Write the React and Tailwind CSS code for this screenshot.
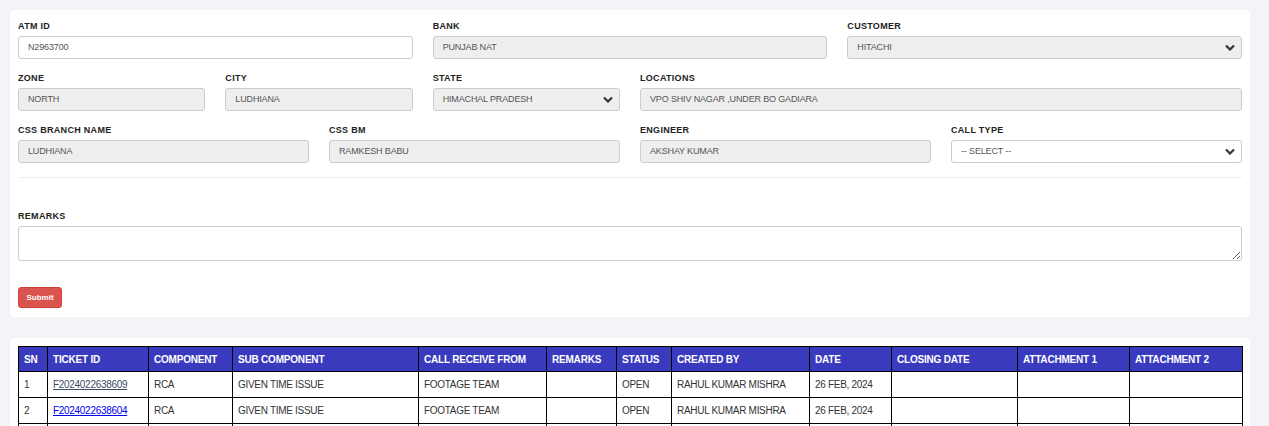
import React from "react";

const font = { fontFamily: '"Liberation Sans", Arial, sans-serif' };

function Label({ children }) {
  return (
    <div className="h-[12px] mb-[4px] text-[9px] leading-[12px] font-bold text-[#222] tracking-[0.3px]">
      {children}
    </div>
  );
}

function Field({ label, value, span, readOnly = true }) {
  return (
    <div className={span}>
      <Label>{label}</Label>
      <div
        className={`h-[23px] flex items-center px-[9px] border border-[#ccc] rounded-[3px] text-[9px] tracking-[-0.15px] text-[#555] ${
          readOnly ? "bg-[#eee]" : "bg-white"
        }`}
      >
        {value}
      </div>
    </div>
  );
}

function SelectField({ label, value, span, gray = true }) {
  return (
    <div className={span}>
      <Label>{label}</Label>
      <div
        className={`h-[23px] flex items-center justify-between pl-[9px] pr-[6px] border border-[#ccc] rounded-[3px] text-[9px] tracking-[-0.15px] text-[#555] ${
          gray ? "bg-[#eee]" : "bg-white"
        }`}
      >
        <span>{value}</span>
        <svg width="10" height="7" viewBox="0 0 10 7">
          <path d="M1 1.5 L5 5.5 L9 1.5" fill="none" stroke="#333" strokeWidth="2.2" />
        </svg>
      </div>
    </div>
  );
}

const cols = [
  ["SN", 29],
  ["TICKET ID", 101],
  ["COMPONENT", 84],
  ["SUB COMPONENT", 186],
  ["CALL RECEIVE FROM", 128],
  ["REMARKS", 70],
  ["STATUS", 55],
  ["CREATED BY", 138],
  ["DATE", 82],
  ["CLOSING DATE", 126],
  ["ATTACHMENT 1", 112],
  ["ATTACHMENT 2", 113],
];

const rows = [
  ["1", "F2024022638609", "RCA", "GIVEN TIME ISSUE", "FOOTAGE TEAM", "", "OPEN", "RAHUL KUMAR MISHRA", "26 FEB, 2024", "", "", ""],
  ["2", "F2024022638604", "RCA", "GIVEN TIME ISSUE", "FOOTAGE TEAM", "", "OPEN", "RAHUL KUMAR MISHRA", "26 FEB, 2024", "", "", ""],
  ["", "", "", "", "", "", "", "", "", "", "", ""],
];

export default function App() {
  return (
    <div style={font} className="w-[1269px] h-[426px] overflow-hidden bg-[#f3f4f8] pt-[10px] pl-[10px]">
      <div className="w-[1240px] bg-white rounded-[4px] px-[8px] pt-[10px] pb-[9px]">
        <div className="grid grid-cols-12 gap-x-[20px] gap-y-[13px]">
          <Field label="ATM ID" value="N2963700" span="col-span-4" readOnly={false} />
          <Field label="BANK" value="PUNJAB NAT" span="col-span-4" />
          <SelectField label="CUSTOMER" value="HITACHI" span="col-span-4" />

          <Field label="ZONE" value="NORTH" span="col-span-2" />
          <Field label="CITY" value="LUDHIANA" span="col-span-2" />
          <SelectField label="STATE" value="HIMACHAL PRADESH" span="col-span-2" />
          <Field label="LOCATIONS" value="VPO SHIV NAGAR ,UNDER BO GADIARA" span="col-span-6" />

          <Field label="CSS BRANCH NAME" value="LUDHIANA" span="col-span-3" />
          <Field label="CSS BM" value="RAMKESH BABU" span="col-span-3" />
          <Field label="ENGINEER" value="AKSHAY KUMAR" span="col-span-3" />
          <SelectField label="CALL TYPE" value="-- SELECT --" span="col-span-3" gray={false} />
        </div>

        <div className="mt-[14px] h-px bg-[#eee]" />

        <div className="mt-[32px]">
          <Label>REMARKS</Label>
          <textarea className="block w-full h-[35px] border border-[#ccc] rounded-[3px] bg-white resize-y outline-none" />
        </div>

        <button className="mt-[26px] h-[21px] w-[44px] rounded-[3px] bg-[#d9534f] text-white text-[8px] leading-[19px] font-bold border border-[#d43f3a]">
          Submit
        </button>
      </div>

      <div className="mt-[21px] w-[1240px] h-[100px] bg-white rounded-[4px] px-[8px] pt-[8px]">
        <table className="table-fixed border-collapse w-[1224px] text-[10px]">
          <colgroup>
            {cols.map(([n, w]) => (
              <col key={n} style={{ width: w }} />
            ))}
          </colgroup>
          <thead>
            <tr className="bg-[#3a3abf] h-[25px]">
              {cols.map(([n]) => (
                <th
                  key={n}
                  className="border border-black text-left text-white font-bold px-[5px] whitespace-nowrap tracking-[-0.2px]"
                >
                  {n}
                </th>
              ))}
            </tr>
          </thead>
          <tbody>
            {rows.map((r, i) => (
              <tr key={i} className="h-[26px]">
                {r.map((c, j) => (
                  <td
                    key={j}
                    className="border border-black px-[5px] text-[#333] whitespace-nowrap tracking-[-0.3px]"
                  >
                    {j === 1 && c ? (
                      <a
                        href="#"
                        className={`underline ${i === 0 ? "text-[#3d4a63]" : "text-[#0000ee]"}`}
                      >
                        {c}
                      </a>
                    ) : (
                      c
                    )}
                  </td>
                ))}
              </tr>
            ))}
          </tbody>
        </table>
      </div>
    </div>
  );
}
